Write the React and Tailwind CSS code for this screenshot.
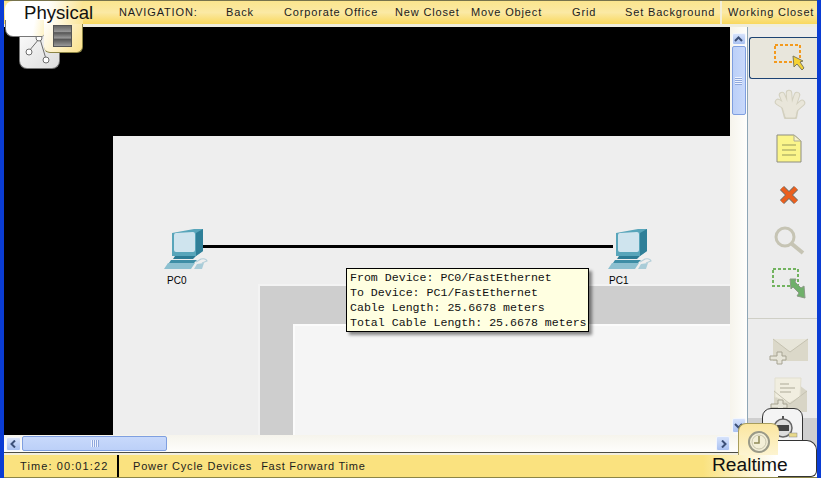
import React from 'react';

const navItems = [
  { label: 'NAVIGATION:', width: 'w-[107px]' },
  { label: 'Back', width: 'w-[58px]' },
  { label: 'Corporate Office', width: 'w-[111px]' },
  { label: 'New Closet', width: 'w-[76px]' },
  { label: 'Move Object', width: 'w-[101px]' },
  { label: 'Grid', width: 'w-[53px]' },
  { label: 'Set Background', width: 'w-[103px]' },
  { label: 'Working Closet', width: 'w-[90px]' },
];

const PcIcon = () => (
  <svg width="46" height="42" viewBox="0 0 46 42">
    <path d="M8 5 L30 1 L39 1 L39 23 L32 28 L8 28 Z" fill="#58a5ba" />
    <path d="M10 7 Q10 5 12 5 L29 4 Q31 4 31 6 L31 22 Q31 24 29 24 L12 24 Q10 24 10 22 Z" fill="#cfe4ee" />
    <path d="M32 5 L39 1 L39 23 L32 28 Z" fill="#2f7f98" />
    <path d="M11 28 L32 28 L29 31 L9 31 Z" fill="#2c7b94" />
    <path d="M7 32 L33 32 L30 35 L5 35 Z" fill="#3e8ea6" />
    <path d="M4 35 L31 35 L27 41 L0 41 Z" fill="#8cc0d0" />
    <path d="M32 34 L37 31 Q42 30 43 33 L38 35" fill="none" stroke="#b4cfd9" strokeWidth="1.2" />
    <path d="M33 36 L40 35 L38 41 L30 41 Z" fill="#a9ccd8" />
  </svg>
);

const ArrowBtn = ({ className, d }) => (
  <div className={`flex items-center justify-center rounded-[2px] border border-[#f3f6fd] bg-[linear-gradient(180deg,#d6e2fb,#a9c1f1)] ${className}`}>
    <svg width="9" height="8" viewBox="0 0 9 8">
      <path d={d} fill="none" stroke="#3c5078" strokeWidth="2" />
    </svg>
  </div>
);

const SelectIcon = () => (
  <svg width="34" height="30" viewBox="0 0 34 30">
    <rect x="2" y="2" width="25" height="17" fill="none" stroke="#f39a1e" strokeWidth="2" strokeDasharray="3 2" />
    <path d="M20 13 L21 24 L24 21 L29 27 L31 25 L27 19 L30 18 Z" fill="#f5d233" stroke="#7d7a5c" strokeWidth="1" />
  </svg>
);

const HandIcon = () => {
  const fingers = 'M15 20 L4 13 M13 18 L8 6 M16 18 L15 4 M19 18 L23 6 M20 21 L28 14';
  return (
    <svg width="32" height="32" viewBox="0 0 32 32">
      <path d={fingers} stroke="#d3d0bf" strokeWidth="6.5" strokeLinecap="round" />
      <path d="M8 18 L24 18 L22 29 L11 29 Z" fill="#d3d0bf" stroke="#d3d0bf" strokeWidth="2" strokeLinejoin="round" />
      <path d={fingers} stroke="#e9e6da" strokeWidth="4.5" strokeLinecap="round" />
      <path d="M9 18 L23 18 L21 28 L12 28 Z" fill="#e9e6da" stroke="#e9e6da" strokeWidth="1" strokeLinejoin="round" />
    </svg>
  );
};

const NoteIcon = () => (
  <svg width="26" height="30" viewBox="0 0 26 30">
    <path d="M1 1 L18 1 L25 7 L25 28 L1 28 Z" fill="#fbf58a" stroke="#8d8d80" />
    <path d="M18 1 L18 7 L25 7 Z" fill="#f6f2c9" stroke="#b0ae90" />
    <path d="M6 11 H20 M6 16 H20 M6 21 H20" stroke="#b9b86c" strokeWidth="1.5" />
  </svg>
);

const DeleteIcon = () => (
  <svg width="20" height="20" viewBox="0 0 20 20">
    <path d="M3 3 L17 17 M17 3 L3 17" stroke="#77736a" strokeWidth="6" />
    <path d="M3 3 L17 17 M17 3 L3 17" stroke="#ea5f1e" strokeWidth="4" />
  </svg>
);

const ZoomIcon = () => (
  <svg width="32" height="30" viewBox="0 0 32 30">
    <circle cx="12" cy="12" r="9" fill="none" stroke="#c6c4b4" strokeWidth="3" />
    <path d="M19 19 L30 28" stroke="#c6c4b4" strokeWidth="4" />
  </svg>
);

const ResizeIcon = () => (
  <svg width="36" height="34" viewBox="0 0 36 34">
    <rect x="2" y="2" width="25" height="17" fill="none" stroke="#72b35f" strokeWidth="2" strokeDasharray="3 2" />
    <path d="M19 12 L25 12 L24 15 L30 21 L33 19 L34 31 L26 29 L28 26 L22 20 L20 22 Z" fill="#6fb06a" stroke="#8b9a86" strokeWidth="1" />
  </svg>
);

const MailPlusIcon = () => (
  <svg width="40" height="27" viewBox="0 0 40 27">
    <rect x="4" y="1" width="35" height="22" fill="#dbd8c9" />
    <path d="M4 1 L21 14 L39 1" fill="#e7e5d9" stroke="#c5c2b1" />
    <path d="M8 14 H13 V18 H17 V22 H13 V26 H8 V22 H1 V18 H8 Z" fill="#e7e5d9" stroke="#a6a392" />
  </svg>
);

const MailOpenIcon = () => (
  <svg width="40" height="36" viewBox="0 0 40 36">
    <path d="M5 14 L22 2 L38 14 L38 35 L5 35 Z" fill="#d8d5c6" />
    <path d="M6 1 L32 1 L31 20 L20 26 L6 20 Z" fill="#f1eee0" stroke="#e2dfcf" />
    <path d="M11 7 H20 M11 11 H26 M11 15 H22" stroke="#cfccbc" strokeWidth="2" />
    <path d="M5 14 L21 27 L38 14" fill="none" stroke="#c5c2b1" />
    <path d="M9 23 H14 V27 H18 V31 H14 V36 H9 V31 H2 V27 H9 Z" fill="#e7e5d9" stroke="#a6a392" />
  </svg>
);

const VerticalScroll = () => (
  <div className="w-[17px] h-full flex flex-col items-center pt-[6px] bg-[linear-gradient(90deg,#f6f4ec,#fefefc)]">
    <ArrowBtn className="w-[14px] h-[12px]" d="M1 6 L4.5 2.5 L8 6" />
    <div className="mt-[1px] w-[14px] h-[69px] flex items-center justify-center rounded-[2px] border border-[#7f9fe0] bg-[linear-gradient(90deg,#bcd0f8,#c8d9fb)]">
      <div className="w-[7px] h-[8px] bg-[repeating-linear-gradient(180deg,#eef3fe_0,#eef3fe_1px,#8fa8dc_1px,#8fa8dc_2px)]" />
    </div>
    <div className="flex-1" />
    <ArrowBtn className="w-[14px] h-[15px] mb-[2px]" d="M1 2 L4.5 5.5 L8 2" />
  </div>
);

const App = () => {
  return (
    <div className="relative w-[821px] h-[478px] overflow-hidden flex flex-col bg-[#0a3cd4] px-[4px] font-['Liberation_Sans',sans-serif] text-[#1c1c1c]">
      {/* top nav */}
      <div className="relative h-[24px] shrink-0 flex items-center pl-[115px] border-t border-[#77734c] bg-[linear-gradient(180deg,#fbe58e,#fbe9a4_50%,#f9d85e)] text-[11px] tracking-[0.85px]">
        {navItems.map((item) => (
          <span key={item.label} className={`${item.width} shrink-0 whitespace-nowrap`}>
            {item.label}
          </span>
        ))}
        <div className="absolute left-[716px] top-0 h-full w-[2px] bg-[#f4efd6]" />
      </div>
      <div className="h-[3px] shrink-0 bg-[#efeddd]" />

      {/* middle */}
      <div className="flex flex-1 min-h-0">
        <div className="flex-1 flex flex-col min-w-0">
          <div className="flex flex-1 min-h-0">
            {/* canvas */}
            <div className="relative flex-1 bg-black overflow-hidden">
              <div className="absolute left-[109px] top-[109px] right-0 bottom-0 bg-[#eeeeee]" />
              <div className="absolute left-[254px] top-[257px] right-0 bottom-0 bg-[#cecece] border-l-2 border-t-2 border-[#f3f3f3]" />
              <div className="absolute left-[289px] top-[297px] right-0 bottom-0 bg-[#f5f5f5] border-l-2 border-t-2 border-[#fbfbfb]" />

              <div className="absolute left-[199px] top-[218px] w-[410px] h-[3px] bg-black" />

              <div className="absolute left-[160px] top-[201px]"><PcIcon /></div>
              <span className="absolute left-[163px] top-[246px] text-[10px] text-black">PC0</span>
              <div className="absolute left-[604px] top-[201px]"><PcIcon /></div>
              <span className="absolute left-[605px] top-[246px] text-[10px] text-black">PC1</span>

              <div className="absolute left-[342px] top-[241px] w-[243px] h-[64px] px-[3px] py-[1px] border border-black bg-[#ffffe1] shadow-[3px_3px_3px_rgba(0,0,0,0.45)] font-['Liberation_Mono',monospace] text-[11.6px] leading-[15px] text-[#111] whitespace-nowrap">
                <div>From Device: PC0/FastEthernet</div>
                <div>To Device: PC1/FastEthernet</div>
                <div>Cable Length: 25.6678 meters</div>
                <div>Total Cable Length: 25.6678 meters</div>
              </div>
            </div>
            <VerticalScroll />
          </div>

          {/* horizontal scrollbar */}
          <div className="h-[17px] shrink-0 flex items-center pl-[2px] pr-[17px] bg-[linear-gradient(180deg,#f6f4ec,#fefefc)]">
            <ArrowBtn className="w-[15px] h-[14px]" d="M6 0.5 L2.5 4 L6 7.5" />
            <div className="ml-[1px] w-[145px] h-[15px] flex items-center justify-center rounded-[2px] border border-[#7f9fe0] bg-[linear-gradient(180deg,#c8d9fb,#bcd0f8)]">
              <div className="w-[8px] h-[7px] bg-[repeating-linear-gradient(90deg,#eef3fe_0,#eef3fe_1px,#8fa8dc_1px,#8fa8dc_2px)]" />
            </div>
            <div className="flex-1" />
            <ArrowBtn className="w-[14px] h-[15px]" d="M3 0.5 L6.5 4 L3 7.5" />
          </div>
        </div>

        {/* right toolbar */}
        <div className="w-[70px] shrink-0 flex flex-col items-center pt-[10px] border-l border-[#8ea6b6] bg-[#ececec] overflow-hidden">
          <div className="w-[69px] h-[42px] ml-[1px] pl-[23px] shrink-0 flex items-center rounded-l-[3px] border border-r-0 border-[#1c4373] bg-[#e8e6dc]">
            <SelectIcon />
          </div>
          <div className="mt-[10px] ml-[15px] h-[32px] shrink-0"><HandIcon /></div>
          <div className="mt-[13px] ml-[13px] h-[30px] shrink-0"><NoteIcon /></div>
          <div className="mt-[21px] ml-[13px] h-[20px] shrink-0"><DeleteIcon /></div>
          <div className="mt-[20px] ml-[12px] h-[30px] shrink-0"><ZoomIcon /></div>
          <div className="mt-[12px] ml-[13px] h-[34px] shrink-0"><ResizeIcon /></div>
          <div className="mt-[17px] w-full shrink-0 border-t border-[#cfcfc6]" />
          <div className="mt-[19px] ml-[12px] h-[27px] shrink-0"><MailPlusIcon /></div>
          <div className="mt-[12px] ml-[12px] h-[36px] shrink-0"><MailOpenIcon /></div>
          <div className="mt-[5px] flex-1 w-full bg-[#cfcfcf]" />
        </div>
      </div>

      {/* status bar */}
      <div className="h-[26px] shrink-0 flex border-t border-[#4c4c44] bg-[#f2efdf] pt-[2px]">
        <div className="flex-1 flex items-center bg-[linear-gradient(90deg,#fae27f_86%,#fdf3c8_91%,#ffffff_95%)] border-b border-[#8c8546] text-[11px]">
          <span className="w-[115px] pl-[16px] h-full flex items-center border-r-2 border-black whitespace-nowrap tracking-[1.1px]">Time: 00:01:22</span>
          <span className="ml-[14px] whitespace-nowrap tracking-[0.8px]">Power Cycle Devices</span>
          <span className="ml-[9px] whitespace-nowrap tracking-[0.75px]">Fast Forward Time</span>
        </div>
      </div>

      {/* physical / logical tabs */}
      <div className="absolute left-[19px] top-[30px] w-[41px] h-[39px] rounded-b-[8px] border border-t-0 border-[#777] bg-[linear-gradient(135deg,#fbfbfb,#dcdcdc)]">
        <svg className="absolute left-0 top-0" width="40" height="38" viewBox="0 0 40 38">
          <path d="M19 9 L9 21 M20 9 L26 29" stroke="#6d6d6d" fill="none" />
          <circle cx="19" cy="8" r="3" fill="#fff" stroke="#6d6d6d" />
          <circle cx="9" cy="22" r="3" fill="#fff" stroke="#6d6d6d" />
          <circle cx="26" cy="30" r="3" fill="#fff" stroke="#6d6d6d" />
        </svg>
      </div>
      <div className="absolute left-[44px] top-[22px] w-[39px] h-[31px] rounded-b-[6px] border-r border-b border-[#8c8546] bg-[linear-gradient(120deg,#ffffff,#fbe18a)]">
        <div className="absolute left-[9px] top-[3px] w-[19px] h-[22px] border border-[#555] bg-[linear-gradient(180deg,#666_0,#999_30%,#555_33%,#999_60%,#555_66%,#999_100%)]" />
      </div>
      <div className="absolute left-[5px] top-[1px] w-[78px] h-[23px] rounded-tl-[8px] bg-[linear-gradient(90deg,#ffffff_55%,#fbe594)]" />
      <div className="absolute left-[5px] top-[20px] w-[39px] h-[17px] rounded-bl-[8px] rounded-br-[3px] border-b border-l border-[#777] bg-[linear-gradient(100deg,#ffffff_70%,#fdf2c6)]" />
      <span className="absolute left-[24px] top-[2px] text-[18.6px] leading-[22px] text-[#111]">Physical</span>

      {/* simulation / realtime tabs */}
      <div className="absolute left-[762px] top-[408px] w-[41px] h-[36px] rounded-t-[9px] border border-[#333] bg-[#f4f4f4]">
        <svg className="absolute left-[7px] top-[7px]" width="28" height="24" viewBox="0 0 28 24">
          <circle cx="13" cy="12" r="9" fill="#ddd" stroke="#666" strokeWidth="1.5" />
          <rect x="12" y="0" width="2" height="3" fill="#555" />
          <rect x="7" y="9" width="12" height="6" fill="#444" />
          <rect x="19" y="17" width="8" height="4" fill="#e8d98a" stroke="#888" strokeWidth="0.5" />
        </svg>
      </div>
      <div className="absolute left-[738px] top-[423px] w-[41px] h-[32px] rounded-t-[8px] border-t border-l border-[#a89d5c] bg-[linear-gradient(180deg,#fbe6a0,#fdf4d0)]">
        <svg className="absolute left-[7px] top-[5px]" width="26" height="26" viewBox="0 0 26 26">
          <circle cx="13" cy="13" r="10" fill="#f3efd8" stroke="#9a9a88" strokeWidth="2" />
          <circle cx="13" cy="13" r="7" fill="none" stroke="#c9c6ae" strokeWidth="1" />
          <path d="M13 7 V14 H8" stroke="#8f8a58" fill="none" strokeWidth="1.5" />
        </svg>
      </div>
      <div className="absolute left-[778px] top-[440px] w-[39px] h-[37px] rounded-tr-[10px] rounded-br-[6px] border-t border-r border-b border-[#333] bg-white" />
      <span className="absolute left-[712px] top-[454px] text-[19.2px] leading-[22px] text-[#111]">Realtime</span>
    </div>
  );
};

export default App;
